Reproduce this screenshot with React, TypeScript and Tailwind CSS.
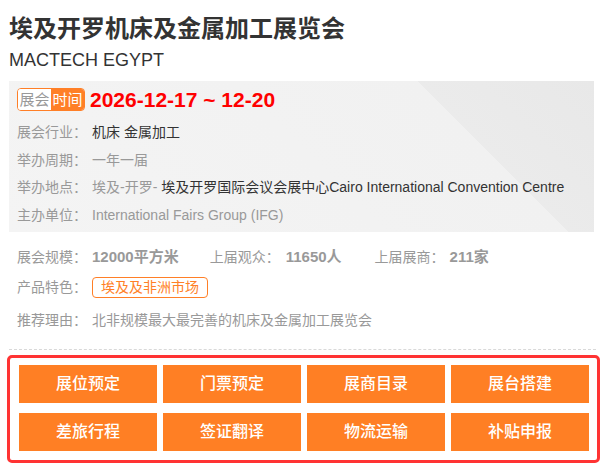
import React from "react";

const font = "font-['Liberation_Sans','Noto_Sans_CJK_SC',sans-serif]";

function InfoRow({ label, children }: { label: string; children: React.ReactNode }) {
  return (
    <div className="flex h-[27.5px] items-center text-[14px] leading-[27.5px]">
      <span className="w-[75px] shrink-0 text-[#999]">{label}</span>
      <span className="whitespace-nowrap">{children}</span>
    </div>
  );
}

const buttons = ["展位预定", "门票预定", "展商目录", "展台搭建", "差旅行程", "签证翻译", "物流运输", "补贴申报"];

export default function App() {
  return (
    <div className={`${font} w-[608px] h-[468px] bg-white overflow-hidden`}>
      <div className="ml-[9px] w-[585px] pt-[14px]">
        <h1 className="text-[24px] leading-[30px] font-bold text-[#333] whitespace-nowrap">
          埃及开罗机床及金属加工展览会
        </h1>
        <div className="mt-[4px] text-[18px] leading-[24px] text-[#333]">MACTECH EGYPT</div>

        <div className="mt-[9px] h-[151px] pl-[8px] pt-[7px] bg-[linear-gradient(225deg,#e8e8e8_0%,#ebebeb_24%,#f1f1f1_24%,#f4f4f4_100%)]">
          <div className="flex h-[23px] items-center">
            <div className="flex h-[23px] w-[68px] overflow-hidden rounded-[4px] border border-[#ff7f27] text-[15px] leading-[21px]">
              <span className="flex w-[34px] items-center justify-center bg-white text-[#999]">展会</span>
              <span className="flex w-[34px] items-center justify-center bg-[#ff7f27] text-white">时间</span>
            </div>
            <span className="ml-[5px] text-[21px] font-bold leading-[23px] text-[#ff0000] whitespace-nowrap">
              2026-12-17 ~ 12-20
            </span>
          </div>
          <div className="mt-[8px]">
            <InfoRow label="展会行业：">
              <span className="text-[#333]">机床 金属加工</span>
            </InfoRow>
            <InfoRow label="举办周期：">
              <span className="text-[#999]">一年一届</span>
            </InfoRow>
            <InfoRow label="举办地点：">
              <span className="text-[#999]">埃及-开罗- </span>
              <span className="text-[#333]">埃及开罗国际会议会展中心Cairo International Convention Centre</span>
            </InfoRow>
            <InfoRow label="主办单位：">
              <span className="text-[#999]">International Fairs Group (IFG)</span>
            </InfoRow>
          </div>
        </div>

        <div className="pl-[8px] pt-[10px] text-[14px] text-[#999]">
          <div className="flex h-[30px] items-center leading-[30px] whitespace-nowrap">
            <span className="w-[75px] shrink-0">展会规模：</span>
            <span className="mr-[31px] text-[15px] font-bold text-[#999]">12000平方米</span>
            <span className="w-[76px] shrink-0">上届观众：</span>
            <span className="mr-[33px] text-[15px] font-bold text-[#999]">11650人</span>
            <span className="w-[75px] shrink-0">上届展商：</span>
            <span className="text-[15px] font-bold text-[#999]">211家</span>
          </div>
          <div className="flex h-[30px] items-center">
            <span className="w-[75px] shrink-0 leading-[30px]">产品特色：</span>
            <span className="flex h-[21px] items-center rounded-[4px] border border-[#ff7f27] px-[8px] text-[14px] leading-[19px] text-[#ff7f27]">
              埃及及非洲市场
            </span>
          </div>
          <div className="mt-[3px] flex h-[30px] items-center leading-[30px]">
            <span className="w-[75px] shrink-0">推荐理由：</span>
            <span>北非规模最大最完善的机床及金属加工展览会</span>
          </div>
        </div>

        <div className="mt-[14px] w-[587px] border-t border-dashed border-[#d9d9d9]" />

        <div className="mt-[5px] -ml-[2px] w-[593px] rounded-[5px] border-[3px] border-[#ff3333] pt-[7px] pb-[9px] pl-[9px] pr-[8px]">
          <div className="grid grid-cols-4 gap-x-[6px] gap-y-[10px]">
            {buttons.map((b) => (
              <div
                key={b}
                className="flex h-[38px] items-center justify-center bg-[#ff7f24] text-[16px] font-medium text-white"
              >
                {b}
              </div>
            ))}
          </div>
        </div>
      </div>
    </div>
  );
}
